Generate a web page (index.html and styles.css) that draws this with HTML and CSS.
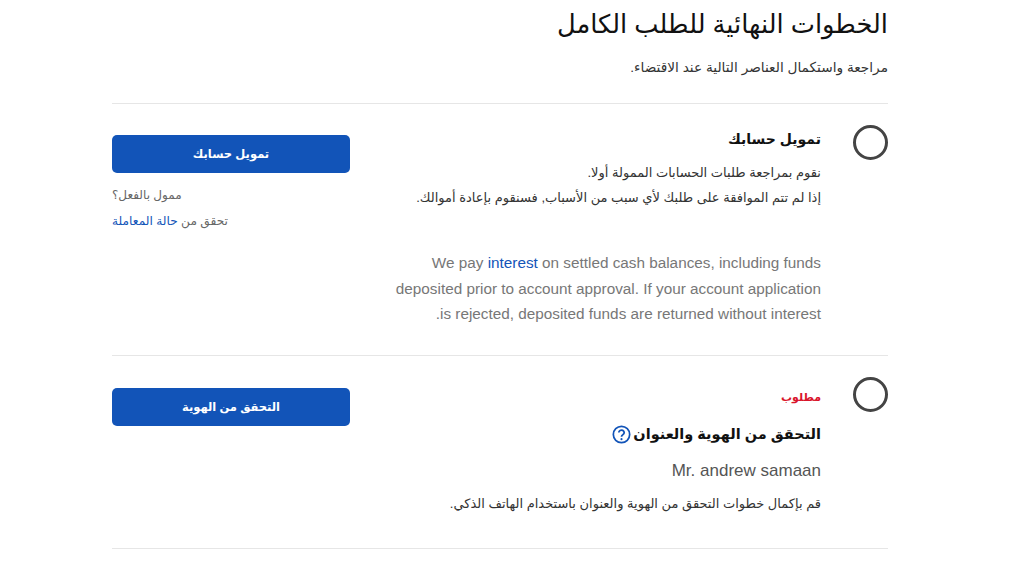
FILE: index.html
```html
<!DOCTYPE html>
<html lang="ar" dir="rtl">
<head>
    <meta charset="UTF-8" />
    <meta name="viewport" content="width=device-width, initial-scale=1" />
    <title>الخطوات النهائية للطلب الكامل</title>
    <link rel="stylesheet" href="styles.css">
</head>
<body>
    <main class="page">
        <header class="page-head">
            <h1>الخطوات النهائية للطلب الكامل</h1>
            <p>مراجعة واستكمال العناصر التالية عند الاقتضاء.</p>
        </header>

        <section class="step step-fund">
            <span class="step-circle"></span>
            <div class="step-body">
                <h2>تمويل حسابك</h2>
                <p class="step-text">نقوم بمراجعة طلبات الحسابات الممولة أولا.<br>إذا لم تتم الموافقة على طلبك لأي سبب من الأسباب, فسنقوم بإعادة أموالك.</p>
                <p class="step-note">We pay <a href="#">interest</a> on settled cash balances, including funds deposited prior to account approval. If your account application is rejected, deposited funds are returned without interest.</p>
            </div>
            <div class="step-action">
                <button type="button">تمويل حسابك</button>
                <p class="action-q">ممول بالفعل؟</p>
                <p class="action-link">تحقق من <a href="#">حالة المعاملة</a></p>
            </div>
        </section>

        <section class="step step-id">
            <span class="step-circle"></span>
            <div class="step-body">
                <div class="required">مطلوب</div>
                <h2>التحقق من الهوية والعنوان
                    <svg class="help" viewBox="0 0 20 20" width="19" height="19" aria-hidden="true">
                        <circle cx="10" cy="10" r="8.6" fill="none" stroke="#1254b8" stroke-width="1.8"/>
                        <path d="M7.2 8a2.8 2.6 0 1 1 4.4 2.1c-1 .7-1.6 1.1-1.6 2.3" fill="none" stroke="#1254b8" stroke-width="1.9"/>
                        <circle cx="10" cy="14.9" r="1.1" fill="#1254b8"/>
                    </svg>
                </h2>
                <p class="step-name">Mr. andrew samaan</p>
                <p class="step-text">قم بإكمال خطوات التحقق من الهوية والعنوان باستخدام الهاتف الذكي.</p>
            </div>
            <div class="step-action">
                <button type="button">التحقق من الهوية</button>
            </div>
        </section>
    </main>
</body>
</html>
```

FILE: styles.css
```css
/* Grundlayout */
* {
    box-sizing: border-box;
}
body {
    margin: 0;
    padding-right: 24px;
    background: #fff;
    color: #333;
    font-family: "Liberation Sans", "DejaVu Sans", sans-serif;
}
a {
    color: #1254b8;
    text-decoration: none;
}
.page {
    width: 776px;
    margin: 0 auto;
}

/* Kopf */
.page-head {
    padding-top: 6px;
    padding-bottom: 23px;
    border-bottom: 1px solid #e6e6e6;
}
.page-head h1 {
    margin: 0;
    font-size: 25.7px;
    font-weight: 400;
    line-height: 36px;
    color: #111;
}
.page-head p {
    margin: 14px 0 0;
    font-size: 13.7px;
    line-height: 24px;
}

/* Schritte */
.step {
    display: grid;
    grid-template-columns: 35px 1fr 238px;
    column-gap: 32px;
    border-bottom: 1px solid #e6e6e6;
}
.step-fund {
    height: 252px;
    padding-top: 21px;
}
.step-id {
    height: 193px;
    padding-top: 21px;
}
.step-circle {
    width: 35px;
    height: 35px;
    border: 3px solid #444;
    border-radius: 50%;
}
.step-fund .step-body {
    padding-top: 1px;
}
.step-id .step-body {
    padding-top: 8px;
}
.step-body h2 {
    margin: 0;
    font-size: 14px;
    line-height: 26px;
    font-weight: 700;
    color: #111;
    display: flex;
    align-items: center;
    gap: 2px;
}
.step-id h2 {
    margin-top: 12px;
    font-size: 14.5px;
}
.step-text {
    margin: 8px 0 0;
    font-size: 13px;
    line-height: 25px;
}
.step-note {
    margin: 40px 0 0;
    padding-left: 4px;
    font-size: 15.3px;
    line-height: 25.5px;
    color: #777;
}
.required {
    font-size: 11px;
    font-weight: 700;
    line-height: 24px;
    color: #d9142b;
}
.step-name {
    margin: 12px 0 0;
    font-size: 17px;
    line-height: 24px;
    color: #555;
}
.step-id .step-text {
    margin-top: 8px;
}

/* Aktion */
.step-action {
    padding-top: 10px;
    text-align: left;
}
.step-id .step-action {
    padding-top: 11px;
}
.step-action button {
    display: block;
    width: 238px;
    height: 38px;
    border: none;
    border-radius: 5px;
    background: #1254b8;
    color: #fff;
    font-family: inherit;
    font-size: 11.5px;
    font-weight: 700;
    cursor: pointer;
}
.action-q {
    margin: 10px 0 0;
    font-size: 12px;
    line-height: 24px;
    color: #666;
}
.action-link {
    margin: 2px 0 0;
    font-size: 12.2px;
    line-height: 24px;
    color: #666;
}
.help {
    flex: none;
}
```
